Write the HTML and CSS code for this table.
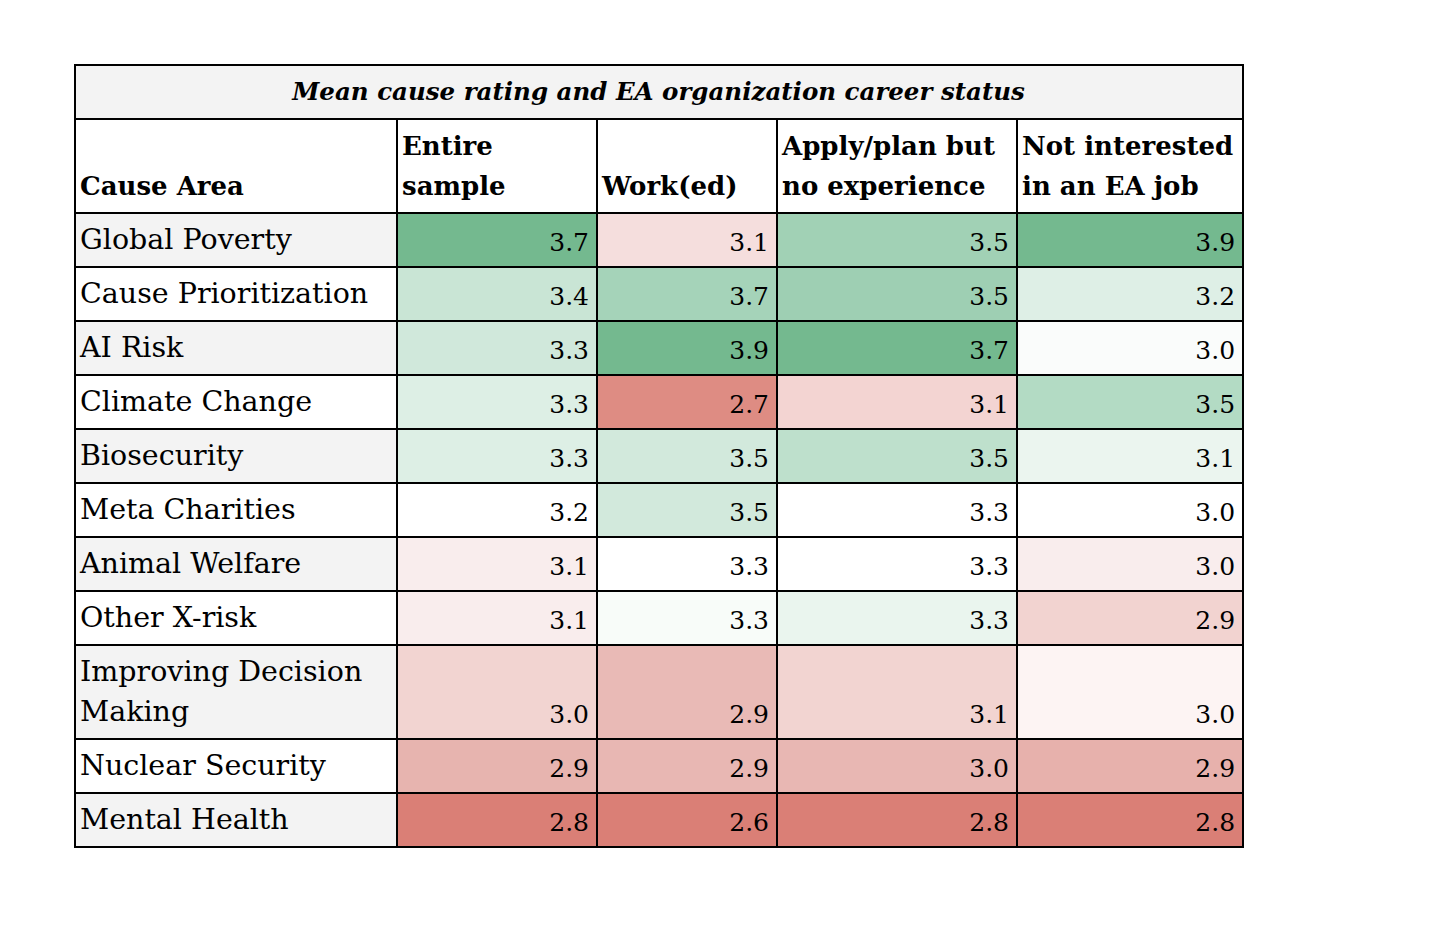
FILE: index.html
```html
<!DOCTYPE html>
<html lang="en">
<head>
<meta charset="utf-8">
<title>Mean cause rating and EA organization career status</title>
<link rel="stylesheet" href="styles.css">
</head>
<body>
<div class="page">
<table class="heat">
  <colgroup>
    <col class="c-label"><col class="c-entire"><col class="c-work"><col class="c-apply"><col class="c-not">
  </colgroup>
  <thead>
    <tr class="title-row"><th colspan="5" class="title">Mean cause rating and EA organization career status</th></tr>
    <tr class="head-row">
      <th class="hl">Cause Area</th>
      <th class="hl">Entire<br>sample</th>
      <th class="hl">Work(ed)</th>
      <th class="hl">Apply/plan but<br>no experience</th>
      <th class="hl">Not interested<br>in an EA job</th>
    </tr>
  </thead>
  <tbody>
    <tr class="odd"><td class="lab">Global Poverty</td><td class="num" style="background:#74b98f">3.7</td><td class="num" style="background:#f5dedd">3.1</td><td class="num" style="background:#a1d1b5">3.5</td><td class="num" style="background:#74b98f">3.9</td></tr>
    <tr><td class="lab">Cause Prioritization</td><td class="num" style="background:#c9e5d5">3.4</td><td class="num" style="background:#a5d3b9">3.7</td><td class="num" style="background:#9ecfb3">3.5</td><td class="num" style="background:#deefe6">3.2</td></tr>
    <tr class="odd"><td class="lab">AI Risk</td><td class="num" style="background:#d0e8db">3.3</td><td class="num" style="background:#74b98f">3.9</td><td class="num" style="background:#74b98f">3.7</td><td class="num" style="background:#fafcfb">3.0</td></tr>
    <tr><td class="lab">Climate Change</td><td class="num" style="background:#ddefe5">3.3</td><td class="num" style="background:#de8c83">2.7</td><td class="num" style="background:#f3d4d2">3.1</td><td class="num" style="background:#b3dbc4">3.5</td></tr>
    <tr class="odd"><td class="lab">Biosecurity</td><td class="num" style="background:#ddefe5">3.3</td><td class="num" style="background:#d2e9dc">3.5</td><td class="num" style="background:#bee0cc">3.5</td><td class="num" style="background:#ebf5ef">3.1</td></tr>
    <tr><td class="lab">Meta Charities</td><td class="num" style="background:#ffffff">3.2</td><td class="num" style="background:#d2e9dc">3.5</td><td class="num" style="background:#ffffff">3.3</td><td class="num" style="background:#ffffff">3.0</td></tr>
    <tr class="odd"><td class="lab">Animal Welfare</td><td class="num" style="background:#f9eded">3.1</td><td class="num" style="background:#ffffff">3.3</td><td class="num" style="background:#ffffff">3.3</td><td class="num" style="background:#f9eded">3.0</td></tr>
    <tr><td class="lab">Other X-risk</td><td class="num" style="background:#f9eded">3.1</td><td class="num" style="background:#f8fcf9">3.3</td><td class="num" style="background:#eaf5ee">3.3</td><td class="num" style="background:#f2d3d0">2.9</td></tr>
    <tr class="odd"><td class="lab">Improving Decision<br>Making</td><td class="num" style="background:#f2d4d1">3.0</td><td class="num" style="background:#e9bab6">2.9</td><td class="num" style="background:#f2d4d1">3.1</td><td class="num" style="background:#fdf4f3">3.0</td></tr>
    <tr><td class="lab">Nuclear Security</td><td class="num" style="background:#e7b4af">2.9</td><td class="num" style="background:#e8b7b3">2.9</td><td class="num" style="background:#e8b7b3">3.0</td><td class="num" style="background:#e7b1ac">2.9</td></tr>
    <tr class="odd"><td class="lab">Mental Health</td><td class="num" style="background:#da7f76">2.8</td><td class="num" style="background:#da7f76">2.6</td><td class="num" style="background:#da7f76">2.8</td><td class="num" style="background:#da7f76">2.8</td></tr>
  </tbody>
</table>
</div>
</body>
</html>
```
FILE: styles.css
```css
html, body {
  margin: 0;
  padding: 0;
  background: #ffffff;
}
.page {
  padding: 64px 0 0 74px;
}
.heat {
  border-collapse: collapse;
  table-layout: fixed;
  width: 1168px;
  font-family: "DejaVu Serif", "Liberation Serif", serif;
  font-size: 28px;
  line-height: 40px;
  color: #000;
}
.c-label { width: 322px; }
.c-entire { width: 200px; }
.c-work { width: 180px; }
.c-apply { width: 240px; }
.c-not { width: 226px; }
.heat th, .heat td {
  border: 2px solid #000;
  padding: 6px 5px 6px 4px;
  vertical-align: bottom;
  overflow: hidden;
  white-space: nowrap;
}
.title {
  background: #f3f3f3;
  font-style: italic;
  font-weight: bold;
  font-size: 24.5px;
  text-align: center;
}
.hl {
  text-align: left;
  font-weight: bold;
  font-size: 26px;
  background: #ffffff;
}
.lab {
  text-align: left;
  font-size: 28.5px;
  background: #ffffff;
}
.odd .lab {
  background: #f3f3f3;
}
.heat .num {
  text-align: right;
  font-size: 25px;
  padding-right: 7px;
  padding-bottom: 3px;
}
```
